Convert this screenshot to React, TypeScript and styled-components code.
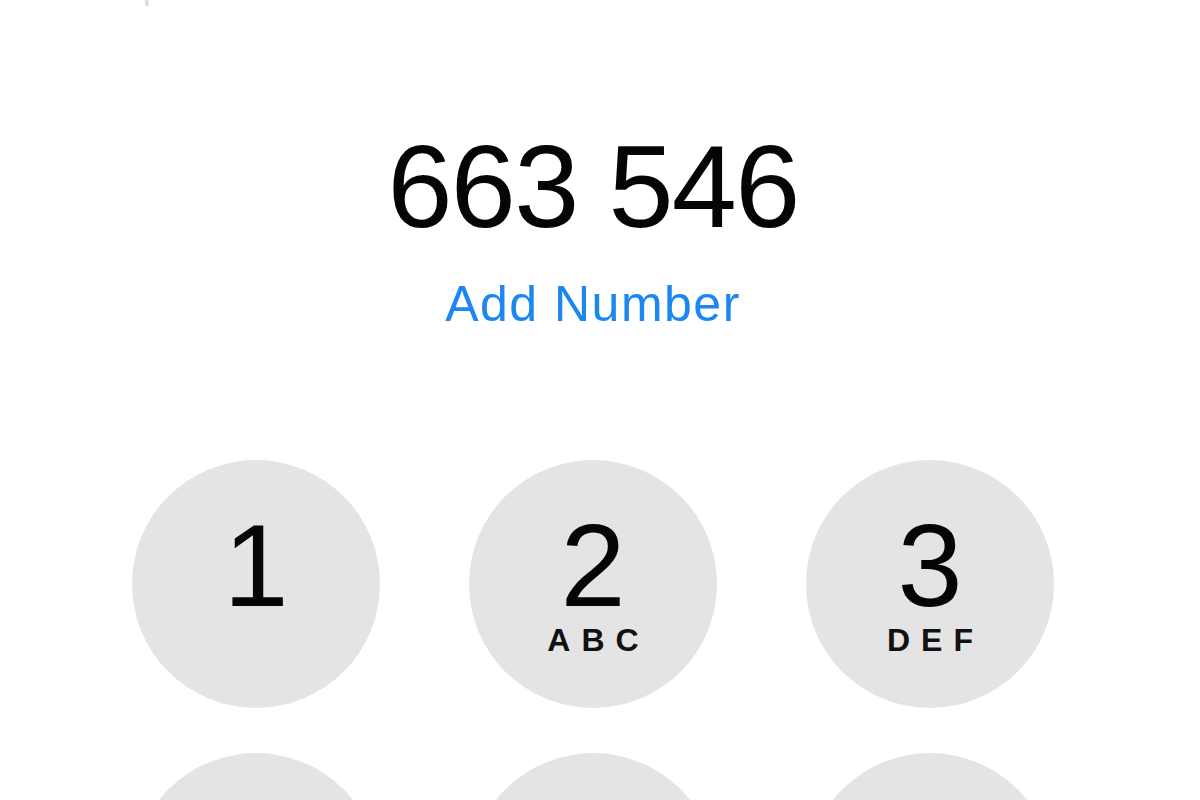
import React from "react";
import styled, { createGlobalStyle } from "styled-components";

const GlobalStyle = createGlobalStyle`
  html, body {
    margin: 0;
    padding: 0;
    background: #ffffff;
  }
  body {
    font-family: "Liberation Sans", Arial, sans-serif;
    overflow: hidden;
  }
`;

const Screen = styled.div`
  width: 1200px;
  height: 800px;
  overflow: hidden;
  background: #ffffff;
  display: flex;
  flex-direction: column;
  & > * {
    flex-shrink: 0;
  }
`;

const StatusBar = styled.div`
  height: 6px;
  overflow: hidden;
  display: flex;
  align-items: flex-end;
  color: #dcdcdc;
  font-size: 36px;
  line-height: 1;
`;

const StatusGroup = styled.span<{ $width: number; $align: string }>`
  width: ${(p) => p.$width}px;
  text-align: ${(p) => p.$align};
  white-space: nowrap;
  overflow: hidden;
`;

const Content = styled.div`
  display: flex;
  flex-direction: column;
  align-items: center;
  padding-right: 14px;
`;

const DialedNumber = styled.div`
  margin-top: 122px;
  font-size: 117px;
  line-height: 1;
  letter-spacing: -1.7px;
  color: #050505;
`;

const AddNumber = styled.div`
  margin-top: 34px;
  font-size: 50px;
  line-height: 1;
  letter-spacing: 1.5px;
  color: #1d87f0;
`;

const Keypad = styled.div`
  margin-top: 131px;
  display: grid;
  grid-template-columns: repeat(3, 248px);
  column-gap: 89px;
  row-gap: 45px;
`;

const Key = styled.div`
  width: 248px;
  height: 248px;
  box-sizing: border-box;
  border-radius: 50%;
  background: #e4e4e4;
  display: flex;
  flex-direction: column;
  align-items: center;
  padding-top: 47px;
`;

const Digit = styled.span`
  font-size: 117px;
  line-height: 1;
  color: #050505;
`;

const Letters = styled.span`
  font-size: 32px;
  font-weight: 700;
  line-height: 1;
  letter-spacing: 11px;
  padding-left: 11px;
  color: #111111;
`;

const keys: { digit: string; letters?: string }[] = [
  { digit: "1" },
  { digit: "2", letters: "ABC" },
  { digit: "3", letters: "DEF" },
  { digit: "4", letters: "GHI" },
  { digit: "5", letters: "JKL" },
  { digit: "6", letters: "MNO" },
  { digit: "7", letters: "PQRS" },
  { digit: "8", letters: "TUV" },
  { digit: "9", letters: "WXYZ" },
  { digit: "*" },
  { digit: "0", letters: "+" },
  { digit: "#" },
];

export default function App() {
  return (
    <>
      <GlobalStyle />
      <Screen>
        <StatusBar>
          <StatusGroup $width={510} $align="left">
            ●●●●○ Sprint&nbsp;&nbsp;LTE
          </StatusGroup>
          <StatusGroup $width={180} $align="left">
            12:45 PM
          </StatusGroup>
          <StatusGroup $width={510} $align="right">
            ⇡&nbsp;&nbsp;&nbsp;97% ▭&nbsp;
          </StatusGroup>
        </StatusBar>
        <Content>
          <DialedNumber>663 546</DialedNumber>
          <AddNumber>Add Number</AddNumber>
          <Keypad>
            {keys.map((k) => (
              <Key key={k.digit}>
                <Digit>{k.digit}</Digit>
                {k.letters && <Letters>{k.letters}</Letters>}
              </Key>
            ))}
          </Keypad>
        </Content>
      </Screen>
    </>
  );
}
